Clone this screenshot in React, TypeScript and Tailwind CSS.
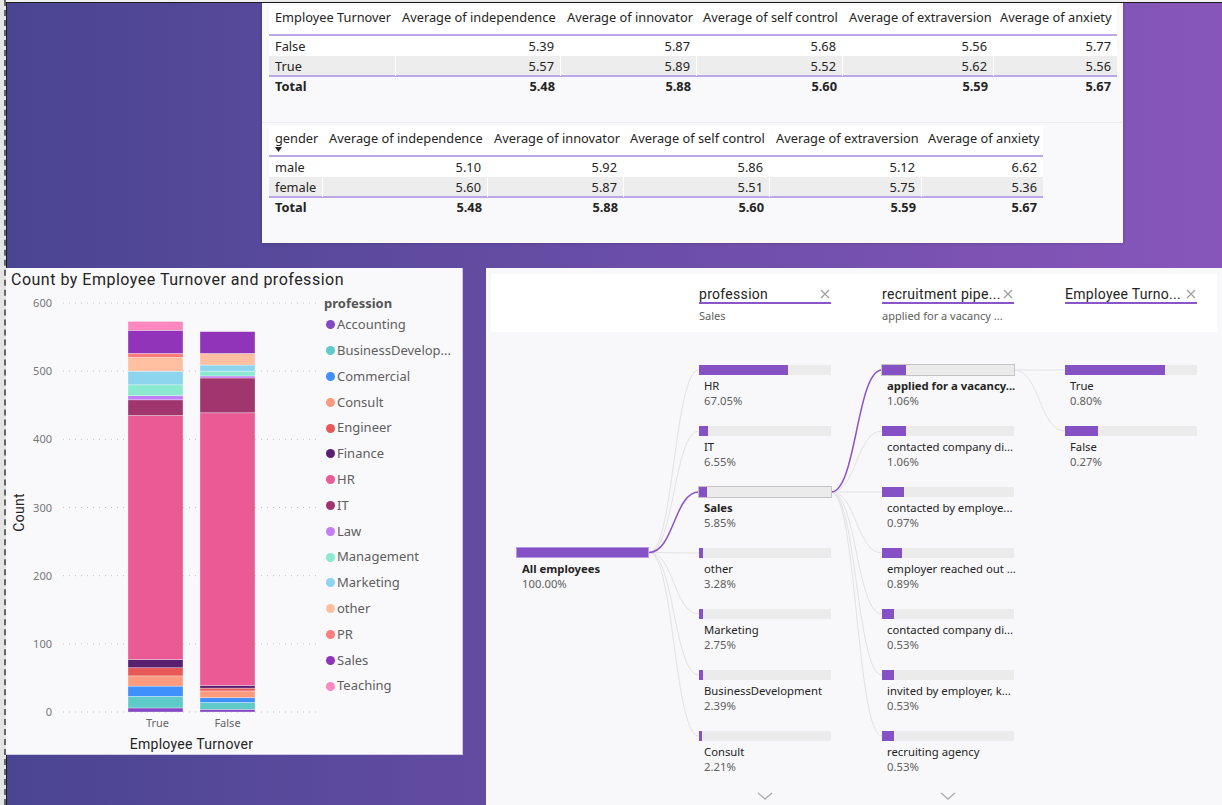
import React from 'react'

const PROFS = [
  { n: 'Accounting', c: '#8548c4', t: 6, f: 4 },
  { n: 'BusinessDevelop...', c: '#5ecbc8', t: 17, f: 10 },
  { n: 'Commercial', c: '#3f8ffc', t: 15, f: 7 },
  { n: 'Consult', c: '#fe9a7d', t: 15, f: 10 },
  { n: 'Engineer', c: '#e85858', t: 12, f: 4 },
  { n: 'Finance', c: '#5b1f6f', t: 12, f: 4 },
  { n: 'HR', c: '#ea5a94', t: 358, f: 400 },
  { n: 'IT', c: '#a1356d', t: 23, f: 51 },
  { n: 'Law', c: '#c17ef5', t: 6, f: 3 },
  { n: 'Management', c: '#8ae9cf', t: 16, f: 7 },
  { n: 'Marketing', c: '#8dd4ef', t: 20, f: 9 },
  { n: 'other', c: '#ffbfa0', t: 20, f: 17 },
  { n: 'PR', c: '#fd7d7a', t: 6, f: 0 },
  { n: 'Sales', c: '#9134ba', t: 34, f: 32 },
  { n: 'Teaching', c: '#fd88bf', t: 13, f: 0 },
]

const HEADS = [
  'Average of independence',
  'Average of innovator',
  'Average of self control',
  'Average of extraversion',
  'Average of anxiety',
]

type TRow = { label: string; vals: string[] }

function PbiTable({
  grid,
  first,
  rows,
  total,
  sort,
}: {
  grid: string
  first: string
  rows: TRow[]
  total: string[]
  sort?: boolean
}) {
  return (
    <div className="w-fit text-[12.8px] text-[#252423]">
      <div className={`grid ${grid} bg-white border-b-2 border-[#bda6e8]`}>
        <div className="h-[29px] px-[6px] pt-[3px] leading-[18px] whitespace-nowrap">
          {first}
          {sort && (
            <svg width="7" height="5" className="block">
              <polygon points="0,0 7,0 3.5,5" fill="#252423" />
            </svg>
          )}
        </div>
        {HEADS.map((h) => (
          <div key={h} className="h-[29px] px-[6px] pt-[3px] leading-[18px] whitespace-nowrap">
            {h}
          </div>
        ))}
      </div>
      {rows.map((r, i) => (
        <div key={r.label} className={`grid ${grid} ${i % 2 ? 'bg-[#ededed] h-[19px]' : 'bg-white h-[20px]'}`}>
          <div className="leading-[20px] px-[6px] border-r border-white">{r.label}</div>
          {r.vals.map((v, j) => (
            <div key={j} className={`leading-[20px] px-[6px] text-right ${j < 4 ? 'border-r border-white' : ''}`}>
              {v}
            </div>
          ))}
        </div>
      ))}
      <div className={`grid ${grid} border-t-2 border-[#bda6e8] font-bold`}>
        <div className="h-[19px] leading-[18px] px-[6px]">Total</div>
        {total.map((v, j) => (
          <div key={j} className="h-[19px] leading-[18px] px-[6px] text-right">
            {v}
          </div>
        ))}
      </div>
    </div>
  )
}

function TablesPanel() {
  const total = ['5.48', '5.88', '5.60', '5.59', '5.67']
  return (
    <div className="ml-[255px] w-[861px] h-[240px] bg-[#f9f9fc] shadow-[0_0_3px_rgba(0,0,0,0.25)] pl-[7px] pt-[2px] font-['Noto_Sans',sans-serif]">
      <PbiTable
        grid="grid-cols-[127px_165px_136px_146px_151px_123px]"
        first="Employee Turnover"
        rows={[
          { label: 'False', vals: ['5.39', '5.87', '5.68', '5.56', '5.77'] },
          { label: 'True', vals: ['5.57', '5.89', '5.52', '5.62', '5.56'] },
        ]}
        total={total}
      />
      <div className="mt-[26px] -ml-[7px] w-[860px] h-px bg-[#ebebf0]" />
      <div className="mt-[3px]">
        <PbiTable
          grid="grid-cols-[54px_165px_136px_146px_152px_121px]"
          first="gender"
          sort
          rows={[
            { label: 'male', vals: ['5.10', '5.92', '5.86', '5.12', '6.62'] },
            { label: 'female', vals: ['5.60', '5.87', '5.51', '5.75', '5.36'] },
          ]}
          total={total}
        />
      </div>
    </div>
  )
}

const SC = 0.6817
const yv = (v: number) => 11 + (600 - v) * SC

function Bar({ x, key2 }: { x: number; key2: 't' | 'f' }) {
  let cum = 0
  return (
    <g>
      {PROFS.map((p) => {
        const h = p[key2] * SC
        const y = yv(0) - cum - h
        cum += h
        if (h <= 0) return null
        return (
          <rect key={p.n} x={x} y={y} width={55} height={h} fill={p.c} stroke="rgba(255,255,255,0.45)" strokeWidth={0.7} />
        )
      })}
    </g>
  )
}

function ChartPanel() {
  const ticks = [600, 500, 400, 300, 200, 100, 0]
  return (
    <div className="-ml-px w-[457px] h-[487px] bg-[#f9f9fc] border-r border-b border-[#cfcadf] text-[#252423]">
      <div className="h-[24px] leading-[24px] pl-[5px] text-[16px] tracking-[0.5px] font-['Roboto',sans-serif] whitespace-nowrap">
        Count by Employee Turnover and profession
      </div>
      <div className="flex">
        <div className="w-[26px] h-[441px] flex items-center justify-center">
          <span className="[writing-mode:vertical-rl] rotate-180 text-[14px] tracking-[0.3px] font-['Roboto',sans-serif]">
            Count
          </span>
        </div>
        <svg width="288" height="441" className="block font-['Noto_Sans',sans-serif]">
          {ticks.map((t) => (
            <g key={t}>
              <line x1={31} x2={288} y1={yv(t)} y2={yv(t)} stroke="#c4c4c4" strokeWidth={1} strokeDasharray="1 5" />
              <text x={20} y={yv(t) + 4} textAnchor="end" fontSize={11} fill="#777">
                {t}
              </text>
            </g>
          ))}
          <Bar x={96} key2="t" />
          <Bar x={168} key2="f" />
          <text x={125.5} y={435} textAnchor="middle" fontSize={11} fill="#666">
            True
          </text>
          <text x={195.5} y={435} textAnchor="middle" fontSize={11} fill="#666">
            False
          </text>
        </svg>
        <div className="ml-[4px] w-[128px] font-['Noto_Sans',sans-serif]">
          <div className="mt-[2px] h-[18px] leading-[18px] text-[13px] font-bold text-[#555]">profession</div>
          {PROFS.map((p) => (
            <div key={p.n} className="h-[25.8px] flex items-center">
              <span className="ml-[2px] w-[9px] h-[9px] rounded-full shrink-0" style={{ backgroundColor: p.c }} />
              <span className="ml-[2px] text-[13px] text-[#605e5c] whitespace-nowrap">{p.n}</span>
            </div>
          ))}
        </div>
      </div>
      <div className="ml-[57px] w-[257px] h-[22px] leading-[22px] text-center text-[14px] tracking-[0.3px] font-['Roboto',sans-serif]">
        Employee Turnover
      </div>
    </div>
  )
}

type TNode = { n: string; p: string; w: number; sel?: boolean }

const L1: TNode[] = [
  { n: 'HR', p: '67.05%', w: 89 },
  { n: 'IT', p: '6.55%', w: 9 },
  { n: 'Sales', p: '5.85%', w: 8, sel: true },
  { n: 'other', p: '3.28%', w: 4 },
  { n: 'Marketing', p: '2.75%', w: 4 },
  { n: 'BusinessDevelopment', p: '2.39%', w: 4 },
  { n: 'Consult', p: '2.21%', w: 3 },
]

const L2: TNode[] = [
  { n: 'applied for a vacancy...', p: '1.06%', w: 24, sel: true },
  { n: 'contacted company di...', p: '1.06%', w: 24 },
  { n: 'contacted by employe...', p: '0.97%', w: 22 },
  { n: 'employer reached out ...', p: '0.89%', w: 20 },
  { n: 'contacted company di...', p: '0.53%', w: 12 },
  { n: 'invited by employer, k...', p: '0.53%', w: 12 },
  { n: 'recruiting agency', p: '0.53%', w: 12 },
]

const L3: TNode[] = [
  { n: 'True', p: '0.80%', w: 100 },
  { n: 'False', p: '0.27%', w: 33 },
]

function Node({ d }: { d: TNode }) {
  return (
    <div className="h-[61px] w-[132px]">
      <div className={`h-[10px] w-[132px] bg-[#ebebeb] ${d.sel ? 'outline outline-1 outline-[#c4c4c4]' : ''}`}>
        <div className="h-full bg-[#8651c4]" style={{ width: d.w }} />
      </div>
      <div className="pl-[5px] pt-[3px] text-[11.3px] leading-[15px]">
        <div className={`whitespace-nowrap ${d.sel ? 'font-bold text-[#252423]' : 'text-[#252423]'}`}>{d.n}</div>
        <div className="text-[#605e5c]">{d.p}</div>
      </div>
    </div>
  )
}

function XIcon() {
  return (
    <svg width="10" height="10" viewBox="0 0 10 10" className="shrink-0 mr-[1px]">
      <path d="M1 1 L9 9 M9 1 L1 9" stroke="#a0a0a0" strokeWidth="1.3" />
    </svg>
  )
}

function Chevron() {
  return (
    <div className="flex justify-center h-[8px]">
      <svg width="16" height="8" viewBox="0 0 16 8">
        <polyline points="1,1 8,7 15,1" fill="none" stroke="#b0b0b0" strokeWidth="1.4" />
      </svg>
    </div>
  )
}

function HeadItem({ title, sub, first }: { title: string; sub?: string; first?: boolean }) {
  return (
    <div className={`w-[132px] pt-[11px] ${first ? 'ml-[208px]' : 'ml-[51px]'}`}>
      <div className="flex items-center justify-between h-[19px] border-b-2 border-[#8a55c8]">
        <span className="whitespace-nowrap text-[14px] leading-[18px] tracking-[0.3px] font-['Roboto',sans-serif] text-[#252423]">
          {title}
        </span>
        <XIcon />
      </div>
      {sub && <div className="mt-[5px] text-[11px] leading-[14px] text-[#605e5c] whitespace-nowrap">{sub}</div>}
    </div>
  )
}

const curve = (x1: number, y1: number, x2: number, y2: number) => {
  const m = (x1 + x2) / 2
  return `M${x1},${y1} C${m},${y1} ${m},${y2} ${x2},${y2}`
}

function TreePanel() {
  const rowY = (i: number) => 97 + i * 61 + 5
  return (
    <div className="relative ml-[23px] w-[736px] h-[537px] bg-[#f8f8fb] overflow-hidden font-['Noto_Sans',sans-serif]">
      <svg width="736" height="537" className="absolute left-0 top-0 pointer-events-none">
        {L1.map((d, i) =>
          d.sel ? null : <path key={i} d={curve(163, 284.5, 213, rowY(i))} fill="none" stroke="#e2e2e6" strokeWidth="1" />
        )}
        {L2.map((d, i) =>
          d.sel ? null : <path key={i} d={curve(345, 224, 396, rowY(i))} fill="none" stroke="#e2e2e6" strokeWidth="1" />
        )}
        {L3.map((d, i) => (
          <path key={i} d={curve(528, 102, 579, rowY(i))} fill="none" stroke="#e2e2e6" strokeWidth="1" />
        ))}
        <path d={curve(163, 284.5, 213, 224)} fill="none" stroke="#8a55c8" strokeWidth="1.5" />
        <path d={curve(345, 224, 396, 102)} fill="none" stroke="#8a55c8" strokeWidth="1.5" />
      </svg>
      <div className="relative px-[5px] pt-[6px]">
        <div className="h-[58px] bg-white flex">
          <HeadItem first title="profession" sub="Sales" />
          <HeadItem title="recruitment pipe..." sub="applied for a vacancy ..." />
          <HeadItem title="Employee Turno..." />
        </div>
      </div>
      <div className="relative flex pl-[30px] pt-[33px]">
        <div className="w-[133px] mt-[182px]">
          <div className="h-[11px] w-[133px] bg-[#8651c4] border border-[#b79be0]" />
          <div className="pl-[6px] pt-[3px] text-[11.3px] leading-[15px]">
            <div className="font-bold text-[#252423]">All employees</div>
            <div className="text-[#605e5c]">100.00%</div>
          </div>
        </div>
        <div className="ml-[50px] w-[132px]">
          {L1.map((d, i) => (
            <Node key={i} d={d} />
          ))}
          <Chevron />
        </div>
        <div className="ml-[51px] w-[132px]">
          {L2.map((d, i) => (
            <Node key={i} d={d} />
          ))}
          <Chevron />
        </div>
        <div className="ml-[51px] w-[132px]">
          {L3.map((d, i) => (
            <Node key={i} d={d} />
          ))}
        </div>
      </div>
    </div>
  )
}

export default function App() {
  return (
    <div className="w-[1222px] h-[805px] flex overflow-hidden">
      <div className="w-[6px] h-full bg-[#e4e4e4] border-r-2 border-dashed border-[#666]" />
      <div className="flex-1 flex flex-col">
        <div className="h-[2px] bg-[#f0f0f0]" />
        <div className="flex-1 border-l border-t border-[#1c1c1c] bg-[linear-gradient(90deg,#4a4592,#8856bb)] flex flex-col">
          <TablesPanel />
          <div className="mt-[25px] flex items-start">
            <ChartPanel />
            <TreePanel />
          </div>
        </div>
      </div>
    </div>
  )
}
